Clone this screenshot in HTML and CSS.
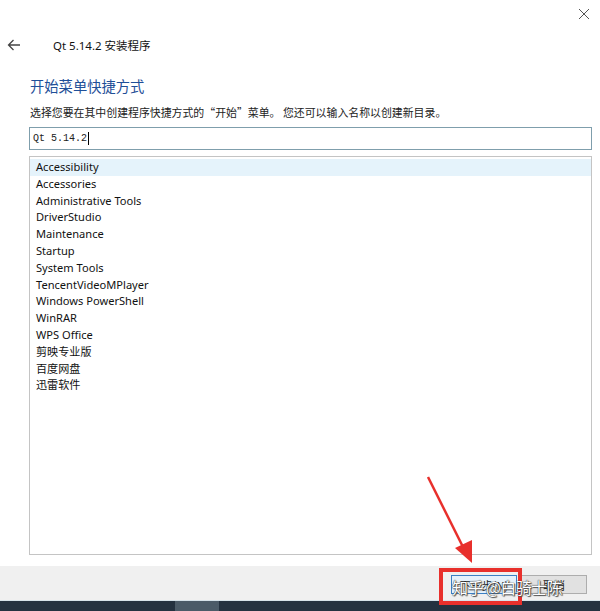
FILE: index.html
```html
<!DOCTYPE html>
<html lang="zh-CN">
<head>
  <meta charset="UTF-8">
  <title>Qt 5.14.2 安装程序</title>
  <link rel="stylesheet" href="styles.css">
</head>
<body>

  <div class="window">
    <div class="titlebar">
      <svg class="close" width="12" height="12" viewBox="0 0 12 12">
        <path d="M1 1 L11 11 M11 1 L1 11" stroke="#555" stroke-width="1" fill="none"/>
      </svg>
    </div>

    <div class="nav">
      <svg class="back" width="14" height="12" viewBox="0 0 14 12">
        <path d="M13 6 H1.5 M6.5 1 L1.5 6 L6.5 11" stroke="#444" stroke-width="1.3" fill="none"/>
      </svg>
      <span class="app-title">Qt 5.14.2 安装程序</span>
    </div>

    <div class="content">
      <h1>开始菜单快捷方式</h1>
      <p class="desc">选择您要在其中创建程序快捷方式的“开始”菜单。 您还可以输入名称以创建新目录。</p>
      <div class="field">Qt 5.14.2<span class="caret"></span></div>
      <ul class="listbox">
        <li class="selected">Accessibility</li>
        <li>Accessories</li>
        <li>Administrative Tools</li>
        <li>DriverStudio</li>
        <li>Maintenance</li>
        <li>Startup</li>
        <li>System Tools</li>
        <li>TencentVideoMPlayer</li>
        <li>Windows PowerShell</li>
        <li>WinRAR</li>
        <li>WPS Office</li>
        <li>剪映专业版</li>
        <li>百度网盘</li>
        <li>迅雷软件</li>
      </ul>
    </div>

    <div class="footer">
      <button class="btn primary">下一步(N)</button>
      <button class="btn">取消</button>
    </div>

    <div class="taskbar">
      <span class="task-item"></span>
    </div>

    <!-- annotations on top of the screenshot -->
    <div class="mark-box"></div>
    <svg class="mark-arrow" width="80" height="100" viewBox="0 0 80 100">
      <path d="M4 4 L39 74" stroke="#e8302c" stroke-width="2.5" fill="none"/>
      <polygon points="31,75 48,67 48,90" fill="#e8302c"/>
    </svg>
    <div class="watermark">知乎 @白骑士陈</div>
  </div>

</body>
</html>
```

FILE: styles.css
```css
body { margin: 0; background: #fff; font-family: "Noto Sans", "Noto Sans CJK SC", sans-serif; color: #000; }
.window { position: relative; width: 600px; height: 611px; overflow: hidden; display: flex; flex-direction: column; }

.titlebar { height: 28px; display: flex; justify-content: flex-end; align-items: center; padding-right: 10px; }
.close { display: block; margin-top: -1px; }

.nav { height: 34px; display: flex; align-items: center; }
.back { margin-left: 7px; }
.app-title { margin-left: 32px; font-size: 11.5px; color: #111; }

.content { padding: 0 8px 0 29px; }
h1 {
  margin: 14px 0 0 1px;
  font-size: 14.3px;
  font-weight: normal;
  color: #1f4f98;
  font-family: "Noto Sans CJK SC", sans-serif;
  line-height: 20px;
}
.desc {
  margin: 9px 0 0 1px;
  font-size: 10.9px;
  color: #222;
  line-height: 14px;
  font-family: "Noto Sans CJK SC", sans-serif;
}
.field {
  margin-top: 8px;
  height: 21px;
  border: 1px solid #7f9eac;
  display: flex;
  align-items: center;
  padding-left: 3px;
  font-family: "Liberation Mono", "Noto Sans CJK SC", monospace;
  font-size: 10px;
  color: #222;
}
.caret { display: inline-block; width: 1px; height: 13px; background: #000; margin-left: 1px; }

.listbox {
  list-style: none;
  margin: 6px 0 0;
  padding: 2px 0 0;
  height: 395px;
  border: 1px solid #c4c4c4;
  font-size: 11.1px;
  font-family: "Noto Sans", "Noto Sans CJK SC", sans-serif;
}
.listbox li { line-height: 16.8px; padding-left: 6px; color: #111; white-space: nowrap; }
.listbox li.selected { background: #e5f3fb; }

.footer {
  margin-top: 11px;
  height: 34px;
  background: #f0f0f0;
  display: flex;
  justify-content: flex-end;
  align-items: center;
  gap: 4px;
  padding-right: 13px;
}
.btn {
  height: 19px;
  width: 66px;
  margin-top: 3px;
  border: 1px solid #adadad;
  background: #e1e1e1;
  font-size: 11px;
  font-family: "Noto Sans CJK SC", sans-serif;
  color: #222;
  padding: 0;
}
.btn.primary { border: 1px solid #3b7fc4; background: #e5f1fb; }

.taskbar { flex: 1; background: #243240; border-top: 1px solid #d6e3ea; position: relative; }
.task-item { position: absolute; left: 175px; top: 0; width: 44px; height: 100%; background: #4b5b68; }

.mark-box {
  position: absolute;
  left: 439px;
  top: 568px;
  width: 75px;
  height: 29px;
  border: 4px solid #e8302c;
}
.mark-arrow { position: absolute; left: 424px; top: 473px; }
.watermark {
  position: absolute;
  left: 452px;
  top: 575px;
  font-size: 16px;
  font-family: "Noto Sans CJK SC", sans-serif;
  color: #fff;
  letter-spacing: -0.6px;
  text-shadow: 0 0 1px #333, 0 0 1px #333, 1px 1px 1px #555;
  white-space: nowrap;
}
```
